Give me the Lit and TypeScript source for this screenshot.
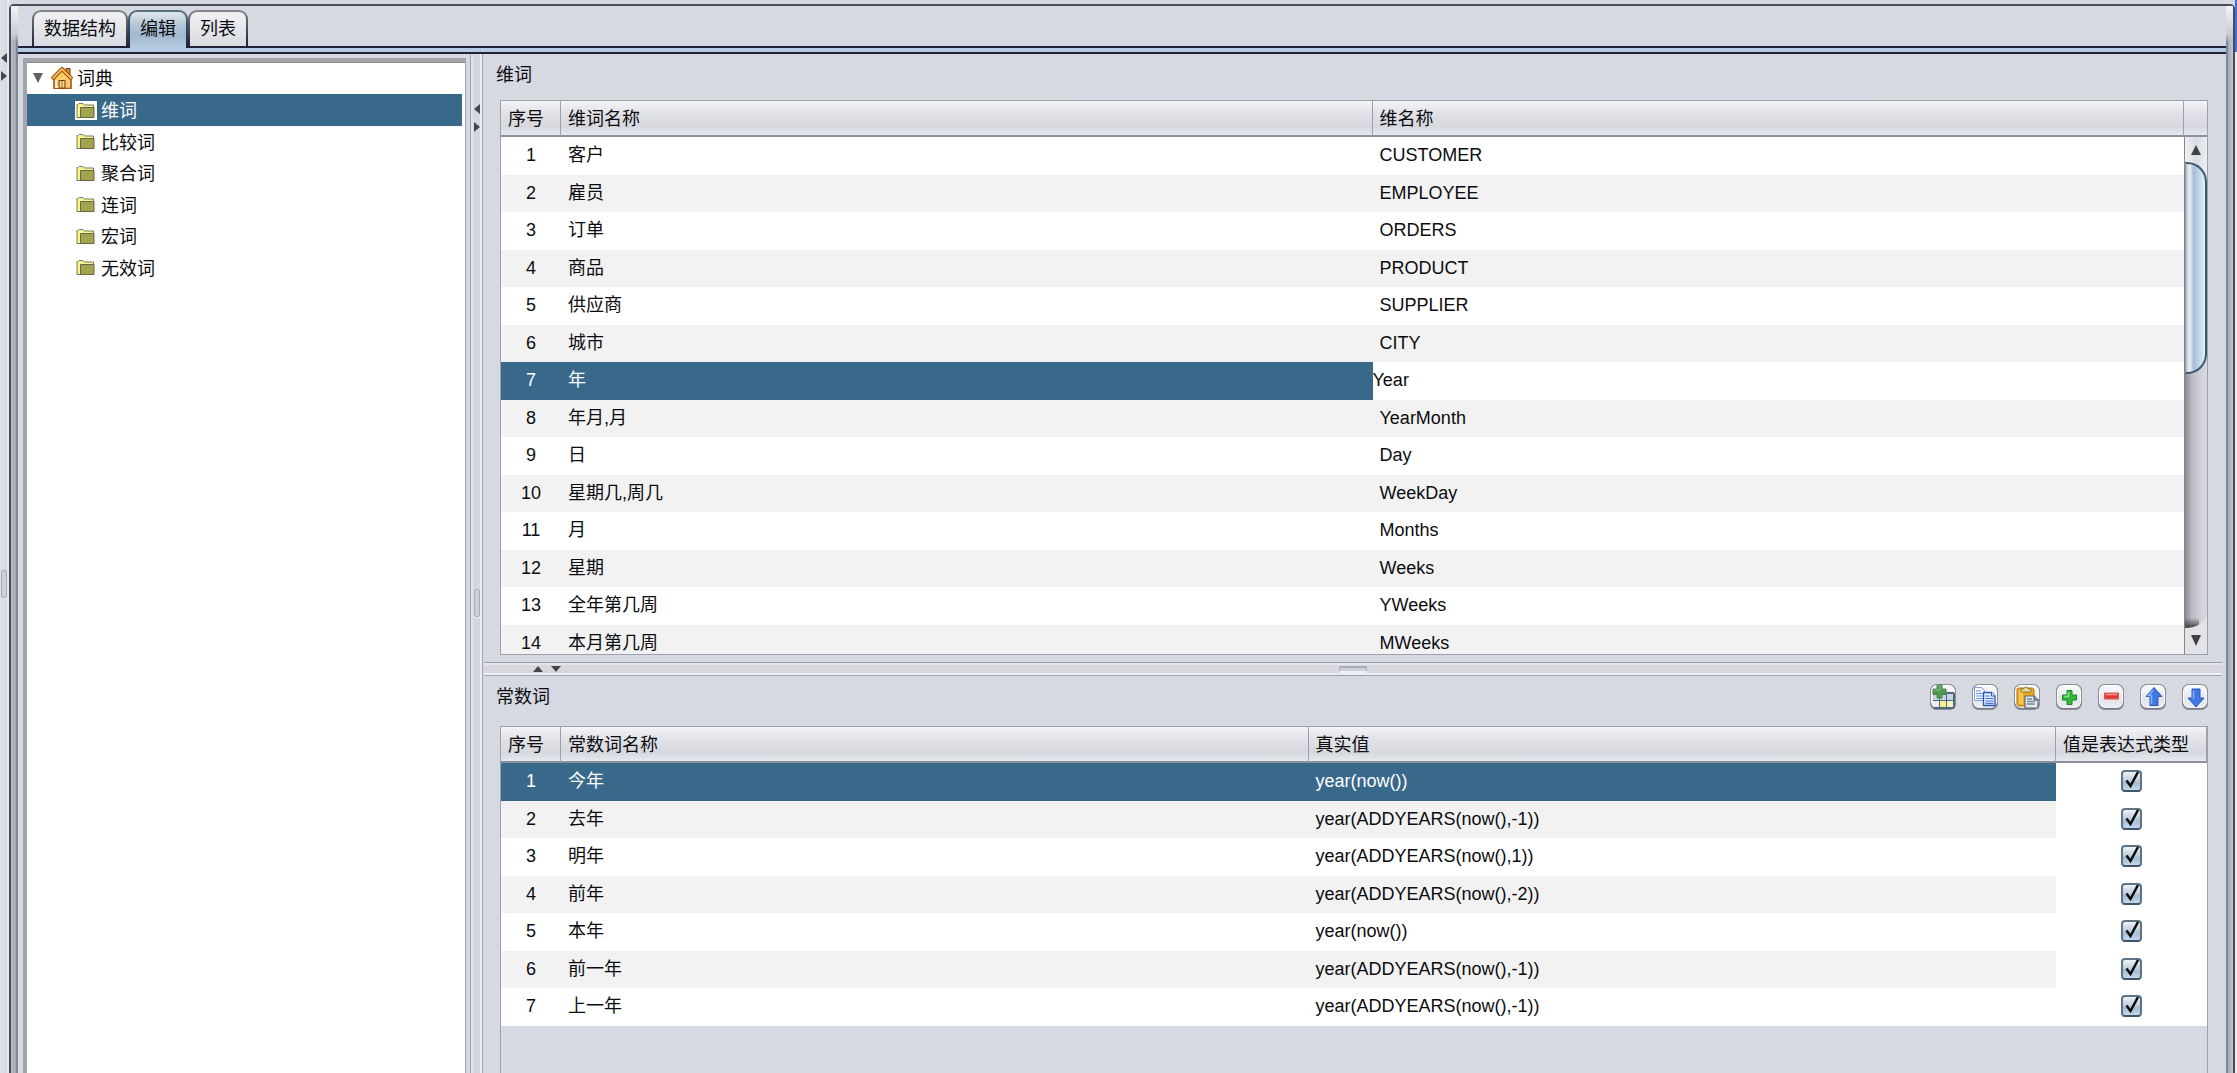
import { LitElement, html, css, svg } from "lit";
import { customElement, property } from "lit/decorators.js";
import { classMap } from "lit/directives/class-map.js";
import { styleMap } from "lit/directives/style-map.js";

const DIMENSIONS: [string, string][] = [
  ["客户", "CUSTOMER"],
  ["雇员", "EMPLOYEE"],
  ["订单", "ORDERS"],
  ["商品", "PRODUCT"],
  ["供应商", "SUPPLIER"],
  ["城市", "CITY"],
  ["年", "Year"],
  ["年月,月", "YearMonth"],
  ["日", "Day"],
  ["星期几,周几", "WeekDay"],
  ["月", "Months"],
  ["星期", "Weeks"],
  ["全年第几周", "YWeeks"],
  ["本月第几周", "MWeeks"],
];
const EDITED_ROW = 6;

const CONSTANTS: [string, string][] = [
  ["今年", "year(now())"],
  ["去年", "year(ADDYEARS(now(),-1))"],
  ["明年", "year(ADDYEARS(now(),1))"],
  ["前年", "year(ADDYEARS(now(),-2))"],
  ["本年", "year(now())"],
  ["前一年", "year(ADDYEARS(now(),-1))"],
  ["上一年", "year(ADDYEARS(now(),-1))"],
];

const TABS = ["数据结构", "编辑", "列表"];
const FOLDERS = ["维词", "比较词", "聚合词", "连词", "宏词", "无效词"];

const TOOLS = [
  {
    label: "插入",
    icon: svg`
      <rect x="3" y="8" width="22" height="17" rx="2" fill="#4b6a7c"/>
      <path d="M3 11h6v5H3zM10 11h6v5h-6zM17 10h6v6h-6z" fill="#c3d3e0"/>
      <path d="M3 17h6v6H3z" fill="#e9eef6"/>
      <path d="M10 17h6v6h-6z" fill="#f7ee8e"/>
      <path d="M17 17h6v6h-6z" fill="#f5f2bd"/>
      <path d="M7 1h5v4h4v5h-4v4H7v-4H3V5h4z" fill="#4f9a51" stroke="#4d8a54"/>
      <path d="M8 2h2v4H5" fill="none" stroke="#8cc58a"/>`,
  },
  {
    label: "复制",
    icon: svg`
      <path d="M2.500 3.500h7l3 3v10h-10z" fill="#f4f8ff" stroke="#7fa0dc"/>
      <path d="M4 7h5M4 9.500h7M4 12h7M4 14.500h7" stroke="#6f95dd" stroke-width="1.200"/>
      <path d="M11.500 8.500h8l3.500 3.500v9.500h-11.500z" fill="#dfe9fd" stroke="#2f55b8" stroke-width="1.300"/>
      <path d="M19.500 8.500v3.500h3.500" fill="#fff" stroke="#2f55b8"/>
      <path d="M13.500 12h4M13.500 14.500h8M13.500 17h8M13.500 19.300h8" stroke="#4a77d8" stroke-width="1.200"/>`,
  },
  {
    label: "粘贴",
    icon: svg`
      <path d="M3 6q0-2 2-2h13q2 0 2 2v14q0 2-2 2H5q-2 0-2-2z" fill="#eda920" stroke="#b87816"/>
      <path d="M5 6h4v14H5z" fill="#f8c550"/>
      <path d="M7 8V5h3q0-2 2-2t2 2h3v3z" fill="#e8dfa3" stroke="#8b7b35"/>
      <path d="M11 12h9l4 4v8H11z" fill="#e3e9ee" stroke="#5b6773" stroke-width="1.200"/>
      <path d="M13 15h5M13 17.500h8M13 20h8" stroke="#71879c" stroke-width="1.300"/>
      <path d="M20 12v4h5" fill="#8595a5" stroke="#4e5a66"/>`,
  },
  {
    label: "添加",
    icon: svg`
      <path d="M11 6.500h5v4.500h4.500v5H16v4.500h-5V16H6.500v-5H11z" fill="#35b638" stroke="#168a24"/>
      <path d="M12.500 8v4.500H8" fill="none" stroke="#8fe08a" stroke-width="1.500"/>`,
  },
  {
    label: "删除",
    icon: svg`
      <rect x="6.500" y="9" width="14" height="6" fill="#e2382f" stroke="#d2605a"/>
      <path d="M8 10.500h11" stroke="#f49a93" stroke-width="1.500"/>`,
  },
  {
    label: "上移",
    icon: svg`
      <path d="M14 3.500l8 9h-4v9h-8v-9H6z" fill="#3f78e4" stroke="#2a59c0"/>
      <path d="M13 6.500l-4.500 5H11.500v8.500" fill="none" stroke="#8db4f7" stroke-width="1.500"/>`,
  },
  {
    label: "下移",
    icon: svg`
      <path d="M14 23l8-9h-4V5h-8v9H6z" fill="#3f78e4" stroke="#2a59c0"/>
      <path d="M11.500 6.500V15" fill="none" stroke="#8db4f7" stroke-width="1.500"/>`,
  },
];

@customElement("split-bar")
export class SplitBar extends LitElement {
  @property({ type: Boolean, reflect: true }) horizontal = false;
  @property({ type: Number }) before = 1;
  @property({ type: Number }) after = 1;

  static styles = css`
    :host {
      display: flex;
      flex-direction: column;
      align-items: center;
      box-sizing: border-box;
      min-width: 0;
      min-height: 0;
    }
    :host([horizontal]) {
      flex-direction: row;
    }
    .arrow {
      flex: none;
      display: block;
      width: 6px;
      height: 10px;
      padding: 0;
      border: 0;
      background: none;
    }
    .arrow + .arrow {
      margin-top: 8px;
    }
    :host([horizontal]) .arrow {
      width: 10px;
      height: 6px;
    }
    :host([horizontal]) .arrow + .arrow {
      margin-top: 0;
      margin-left: 8px;
    }
    .glyph {
      display: block;
      width: 100%;
      height: 100%;
      fill: #44464b;
    }
    .grip {
      flex: none;
      box-sizing: border-box;
      width: 6px;
      height: 28px;
      border: 1px solid #a9adb7;
      border-radius: 2px;
      background: #cdd0d7;
      box-shadow: 0 1px 0 #eef0f4;
    }
    :host([horizontal]) .grip {
      width: 28px;
      height: 6px;
      border-top-width: 2px;
      border-bottom-color: #eef0f4;
    }
  `;

  render() {
    const shapes = this.horizontal
      ? ["M0 6h10L5 0z", "M0 0h10L5 6z"]
      : ["M6 0v10L0 5z", "M0 0v10l6-5z"];
    const box = this.horizontal ? "0 0 10 6" : "0 0 6 10";
    return html`
      ${shapes.map(
        (d, i) => html`<button class="arrow" aria-label=${i ? "展开" : "收起"}>
          <svg class="glyph" viewBox=${box}><path d=${d} /></svg>
        </button>`
      )}
      <span style=${styleMap({ flexGrow: String(this.before) })}></span>
      <span class="grip"></span>
      <span style=${styleMap({ flexGrow: String(this.after) })}></span>
    `;
  }
}

@customElement("app-root")
export class AppRoot extends LitElement {
  static styles = css`
    :host {
      display: block;
      color: #0c0c10;
      font: 18px/24px "Liberation Sans", "Noto Sans CJK SC", sans-serif;
    }
    * {
      box-sizing: border-box;
    }
    button,
    input {
      font: inherit;
      color: inherit;
      margin: 0;
    }
    .page {
      display: grid;
      grid-template-columns: 9px minmax(0, 1fr) 2px;
      grid-template-rows: minmax(0, 1fr);
      height: 100vh;
      overflow: hidden;
      background: #d6d9df;
    }
    .edge {
      padding-top: 53px;
      border-right: 2px solid #e6e8ed;
      background: linear-gradient(90deg, #dfe1e7, #d6d9e0);
    }
    .outside {
      background: linear-gradient(#3c6fd8 52px, #eeeeee 52px);
    }
    .frame {
      display: grid;
      grid-template-columns: 7px minmax(0, 1fr) 7px;
      grid-template-rows: minmax(0, 1fr);
      margin-top: 4px;
      border: 2px solid #4a4c55;
      border-bottom: 0;
      border-radius: 5px 5px 0 0;
      background: #d6d9e1;
    }
    .bevel {
      background: linear-gradient(#f4f4f6, #c9ccd3 28px, transparent 36px),
        linear-gradient(90deg, #b9bec8, #a1a9b5 70%, #7f8995 70%);
    }
    .bevel.right {
      background: linear-gradient(#f4f4f6, #c9ccd3 28px, transparent 36px),
        linear-gradient(270deg, #c2c6ce, #a1a9b5 70%, #7f8995 70%);
    }
    .inner {
      display: grid;
      grid-template-rows: 40px 8px minmax(0, 1fr);
      min-height: 0;
    }
    .tabs {
      display: flex;
      align-items: flex-start;
      padding: 4px 14px 0;
    }
    .tab {
      height: 36px;
      padding: 0 10px;
      border: 2px solid transparent;
      border-bottom: 0;
      border-radius: 9px 9px 0 0;
      background: linear-gradient(#f1f1f4, #d9dbe1) padding-box,
        linear-gradient(#85888f, #55575f 40%, #20223a) border-box;
    }
    .tab.active {
      position: relative;
      height: 38px;
      padding-bottom: 2px;
      background: linear-gradient(#e0e7ec, #b4c7d7 35%, #a1b8ce 65%, #b6cbe0) padding-box,
        linear-gradient(#5d7286, #3a4c66 40%, #20223a) border-box;
    }
    .rule {
      border: solid #20223a;
      border-width: 2px 0;
      background: #b5cae0;
    }
    .body {
      display: grid;
      grid-template-columns: 452px 13px minmax(0, 1fr);
      grid-template-rows: minmax(0, 1fr);
      min-height: 0;
    }
    .side {
      display: flex;
      padding: 4px 4px 0 5px;
      min-height: 0;
    }
    .tree {
      flex: 1;
      margin: 0;
      padding: 0;
      list-style: none;
      border: 3px solid #a1a4ab;
      border-width: 4px 1px 0 4px;
      background: #ffffff;
      box-shadow: inset 0 1px 0 #8e8b88;
      overflow: hidden;
    }
    .node {
      display: flex;
      align-items: center;
      height: 31px;
      margin-right: 3px;
      padding-left: 48px;
    }
    .node:nth-child(even) {
      height: 32px;
    }
    .node.root {
      height: 32px;
      padding-left: 6px;
    }
    .node.selected {
      background: #39698a;
      color: #ffffff;
    }
    .name {
      padding-top: 2px;
    }
    .twisty {
      width: 10px;
      height: 10px;
      margin-right: 8px;
      fill: #606164;
    }
    .house {
      width: 22px;
      height: 22px;
      margin-right: 4px;
    }
    .folder {
      width: 22px;
      height: 19px;
      margin-right: 4px;
    }
    .selected .folder {
      background: #ffffff;
    }
    .vsplit {
      padding-top: 50px;
      border: solid #9ca1ac;
      border-width: 0 1px;
      background: linear-gradient(90deg, #e3e5ea 2px, #d4d7dd 2px, #d4d7dd 9px, #eceef1 9px);
    }
    .hsplit {
      padding-left: 49px;
      margin: 0 4px 0 1px;
      border: solid #9ca1ac;
      border-width: 1px 0;
      background: linear-gradient(#e5e7ec 2px, #d6d8de 2px, #d6d8de 10px, #eceef1 10px);
    }
    .work {
      display: grid;
      grid-template-rows: minmax(0, 608fr) 14px minmax(0, 397fr);
      min-height: 0;
    }
    .pane {
      display: flex;
      flex-direction: column;
      min-height: 0;
      padding: 0 18px 7px 17px;
    }
    .pane.lower {
      padding-bottom: 0;
    }
    .head {
      flex: none;
      display: flex;
      align-items: center;
      justify-content: space-between;
      height: 42px;
      margin: 0 0 4px -4px;
    }
    .lower .head {
      margin-bottom: 8px;
    }
    .title {
      margin: 0;
      font: inherit;
    }
    .tools {
      display: flex;
      gap: 16px;
    }
    .tool {
      width: 26px;
      height: 26px;
      padding: 0;
      border: 0;
      border-radius: 7px;
      background: linear-gradient(#fdfdfe, #e3e5ea 60%, #eff0f4);
      box-shadow: inset 0 0 0 1px #8b8e96, inset 0 -1px 0 1px #777a82, inset 0 0 0 2px #ffffff;
    }
    .tool svg {
      display: block;
      width: 26px;
      height: 26px;
    }
    .sheet {
      flex: 1;
      display: flex;
      min-height: 0;
      border: 1px solid #9ca1ac;
    }
    .lower .sheet {
      border-bottom: 0;
    }
    .scroll {
      flex: 1;
      min-width: 0;
      overflow-y: auto;
      scrollbar-width: none;
    }
    .grid {
      width: 100%;
      table-layout: fixed;
      border-collapse: separate;
      border-spacing: 0;
    }
    .c-no {
      width: 60px;
    }
    .c-flag {
      width: 151px;
    }
    .th {
      position: sticky;
      top: 0;
      height: 36px;
      padding: 2px 7px 0;
      border-right: 1px solid #9ca1ac;
      border-bottom: 2px solid #8b8f99;
      background: linear-gradient(#f4f4f7, #e1e3e8 35%, #d6d8dd 75%, #e5e9f2);
      font-weight: normal;
      text-align: left;
      white-space: nowrap;
    }
    .td {
      height: 37px;
      padding: 0 7px 2px;
      background: #ffffff;
      white-space: nowrap;
      overflow: hidden;
    }
    .row:nth-child(odd) .td {
      height: 38px;
    }
    .row:nth-child(even) .td {
      background: #f2f2f2;
    }
    .row .td.no {
      text-align: center;
    }
    .row.selected .td {
      background: #39698a;
      color: #ffffff;
    }
    .row .td.flag,
    .row .td.edit {
      background: #ffffff;
      color: #0c0c10;
    }
    .row .td.edit {
      padding: 0 0 2px;
    }
    .field {
      display: block;
      width: 100%;
      height: 24px;
      padding: 0;
      border: 0;
      background: transparent;
      outline: none;
    }
    .check {
      display: grid;
      justify-content: center;
    }
    .check > * {
      grid-area: 1 / 1;
      width: 21px;
      height: 22px;
    }
    .box {
      appearance: none;
      border: 2px solid #5c7488;
      border-bottom-color: #3f566b;
      border-radius: 4px;
      background: linear-gradient(#edf2f6, #bccbdb 50%, #a5bbd2 60%, #c4d9ec);
    }
    .tick {
      pointer-events: none;
      fill: none;
      stroke: #0b0b0b;
      stroke-width: 2.5;
    }
    .box:not(:checked) + .tick {
      visibility: hidden;
    }
    .side-bar {
      flex: none;
      display: flex;
      flex-direction: column;
      width: 23px;
    }
    .corner {
      height: 36px;
      border-bottom: 2px solid #8b8f99;
      background: linear-gradient(#f4f4f7, #e1e3e8 35%, #d6d8dd 75%, #e5e9f2);
    }
    .track {
      flex: 1;
      display: flex;
      flex-direction: column;
      min-height: 0;
      border-left: 1px solid #85878d;
      background: linear-gradient(90deg, #8a8b90, #b8babf 30%, #cbcdd3 60%, #d8dae0);
      overflow: hidden;
    }
    .step {
      flex: none;
      display: block;
      width: 22px;
      padding: 0;
      border: 0;
      background: none;
    }
    .step svg {
      display: block;
      width: 22px;
    }
    .step.up {
      height: 45px;
      background: linear-gradient(90deg, #eef0f3, #d9dce1 50%, #eceef1);
    }
    .thumb {
      flex: none;
      height: 41%;
      margin-top: -20px;
      border: 2px solid #3f5a70;
      border-left: 1px solid #8a9bab;
      border-radius: 0 20px 20px 0;
      background: linear-gradient(90deg, #b5c3d4, #edf1f6 20%, #a9bdd6 40%, #bdd2e8 65%, #def1f8);
    }
    .space {
      flex: 1;
    }
  `;

  private head(labels: string[]) {
    return html`<thead>
      <tr>
        ${labels.map((l) => html`<th class="th" scope="col">${l}</th>`)}
      </tr>
    </thead>`;
  }

  private folder() {
    return html`<svg class="folder" viewBox="0 0 22 19" aria-hidden="true">
      <path d="M2 16.500v-13h1l1-1h4l1.500 1.500h9v12.500z" fill="#f6f58a" stroke="#77776a" />
      <path d="M5.500 6.500h13.500v10h-13.500z" fill="#a3a44c" stroke="#66664a" />
    </svg>`;
  }

  private tree() {
    return html`<ul class="tree" role="tree">
      <li class="node root" role="treeitem">
        <svg class="twisty" viewBox="0 0 10 10" aria-hidden="true"><path d="M0 0h10L5 10z" /></svg>
        <svg class="house" viewBox="0 0 22 22" aria-hidden="true">
          <path d="M15 1.500h4v8h-4z" fill="#d98a35" stroke="#7a3210" />
          <path d="M3 11v10.500h17V11L11 3z" fill="#fbcb68" stroke="#a4561c" stroke-width="1.600" />
          <path d="M5 13v7h3" fill="none" stroke="#fff0bd" stroke-width="2" />
          <path d="M1 12L11 2l10 10" fill="none" stroke="#9a4a16" stroke-width="4" />
          <path d="M1.500 11.500L11 2l9.500 9.500" fill="none" stroke="#fbbf55" stroke-width="1.800" />
          <path d="M8 13.500h6V21H8z" fill="#f6dc94" stroke="#7a3210" />
          <path d="M11 14v7" stroke="#b3691f" />
        </svg>
        <span class="name">词典</span>
      </li>
      ${FOLDERS.map(
        (name, i) => html`<li
          class=${classMap({ node: true, selected: i === 0 })}
          role="treeitem"
          aria-selected=${i === 0 ? "true" : "false"}
        >
          ${this.folder()}<span class="name">${name}</span>
        </li>`
      )}
    </ul>`;
  }

  private dimensionPane() {
    return html`<section class="pane">
      <div class="head"><h2 class="title">维词</h2></div>
      <div class="sheet">
        <div class="scroll">
          <table class="grid">
            <colgroup>
              <col class="c-no" />
              <col />
              <col />
            </colgroup>
            ${this.head(["序号", "维词名称", "维名称"])}
            <tbody>
              ${DIMENSIONS.map(([word, name], i) => {
                const edited = i === EDITED_ROW;
                return html`<tr class=${classMap({ row: true, selected: edited })}>
                  <td class="td no">${i + 1}</td>
                  <td class="td">${word}</td>
                  <td class=${classMap({ td: true, edit: edited })}>
                    ${edited
                      ? html`<input class="field" type="text" aria-label="维名称" .value=${name} />`
                      : name}
                  </td>
                </tr>`;
              })}
            </tbody>
          </table>
        </div>
        <div class="side-bar">
          <div class="corner"></div>
          <div class="track">
            <button class="step up" aria-label="向上滚动">
              <svg viewBox="0 0 22 45" height="45"><path d="M6 18h10L11 8z" fill="#404145" /></svg>
            </button>
            <div class="thumb"></div>
            <div class="space"></div>
            <button class="step" aria-label="向下滚动">
              <svg viewBox="0 0 22 44" height="44">
                <defs>
                  <linearGradient id="shade" x1="0" y1="0" x2="0" y2="1">
                    <stop offset="0" stop-color="#3c3d42" stop-opacity="0" />
                    <stop offset="1" stop-color="#3c3d42" />
                  </linearGradient>
                </defs>
                <path d="M0 8h14v10H0z" fill="url(#shade)" />
                <path d="M0 18q16 0 22-13v39H0z" fill="#e2e4e8" />
                <path d="M6 25h10l-5 11z" fill="#404145" />
              </svg>
            </button>
          </div>
        </div>
      </div>
    </section>`;
  }

  private constantPane() {
    return html`<section class="pane lower">
      <div class="head">
        <h2 class="title">常数词</h2>
        <div class="tools">
          ${TOOLS.map(
            (t) => html`<button class="tool" aria-label=${t.label}>
              <svg viewBox="0 0 26 26" aria-hidden="true">${t.icon}</svg>
            </button>`
          )}
        </div>
      </div>
      <div class="sheet">
        <div class="scroll">
          <table class="grid">
            <colgroup>
              <col class="c-no" />
              <col />
              <col />
              <col class="c-flag" />
            </colgroup>
            ${this.head(["序号", "常数词名称", "真实值", "值是表达式类型"])}
            <tbody>
              ${CONSTANTS.map(
                ([word, value], i) => html`<tr class=${classMap({ row: true, selected: i === 0 })}>
                  <td class="td no">${i + 1}</td>
                  <td class="td">${word}</td>
                  <td class="td">${value}</td>
                  <td class="td flag">
                    <label class="check">
                      <input class="box" type="checkbox" checked aria-label="值是表达式类型" />
                      <svg class="tick" viewBox="0 0 21 22" aria-hidden="true">
                        <path d="M5.500 10.500l4 5.500L17 2" />
                      </svg>
                    </label>
                  </td>
                </tr>`
              )}
            </tbody>
          </table>
        </div>
      </div>
    </section>`;
  }

  render() {
    return html`<div class="page">
      <split-bar class="edge" before="488" after="475"></split-bar>
      <div class="frame">
        <div class="bevel"></div>
        <div class="inner">
          <div class="tabs" role="tablist">
            ${TABS.map(
              (t, i) => html`<button
                class=${classMap({ tab: true, active: i === 1 })}
                role="tab"
                aria-selected=${i === 1 ? "true" : "false"}
              >
                ${t}
              </button>`
            )}
          </div>
          <div class="rule"></div>
          <div class="body">
            <nav class="side">${this.tree()}</nav>
            <split-bar class="vsplit"></split-bar>
            <main class="work">
              ${this.dimensionPane()}
              <split-bar class="hsplit" horizontal before="777" after="854"></split-bar>
              ${this.constantPane()}
            </main>
          </div>
        </div>
        <div class="bevel right"></div>
      </div>
      <div class="outside"></div>
    </div>`;
  }
}
